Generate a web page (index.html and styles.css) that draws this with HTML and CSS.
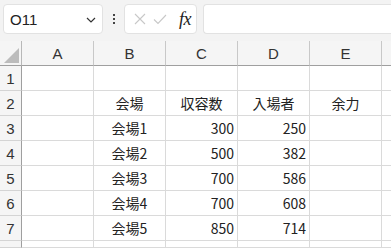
FILE: index.html
```html
<!DOCTYPE html>
<html lang="ja">
<head>
<meta charset="utf-8">
<link rel="stylesheet" href="styles.css">
</head>
<body>
<div class="bar">
  <div class="namebox">
    <span class="ref">O11</span>
    <svg class="chev" width="10" height="6" viewBox="0 0 10 6"><path d="M1 1 L5 5 L9 1" fill="none" stroke="#333" stroke-width="1.2"/></svg>
  </div>
  <div class="dots"><i></i><i></i><i></i></div>
  <div class="fbtns">
    <svg width="12" height="12" viewBox="0 0 12 12"><path d="M1 1 L11 11 M11 1 L1 11" stroke="#c8c8c8" stroke-width="1.1" fill="none"/></svg>
    <svg width="14" height="11" viewBox="0 0 14 11"><path d="M1 5.5 L5 9.5 L13 1" stroke="#c8c8c8" stroke-width="1.1" fill="none"/></svg>
    <span class="fx">fx</span>
  </div>
  <div class="finput"></div>
</div>
<div class="sheet">
  <div class="corner"><svg width="16" height="16" viewBox="0 0 16 16"><path d="M16 1 L16 16 L1 16 Z" fill="#bcbcbc"/></svg></div>
  <div class="ch">A</div><div class="ch">B</div><div class="ch">C</div><div class="ch">D</div><div class="ch">E</div><div class="ch last"></div>

  <div class="rh">1</div><div class="c"></div><div class="c"></div><div class="c"></div><div class="c"></div><div class="c"></div><div class="c last"></div>
  <div class="rh">2</div><div class="c"></div><div class="c ctr">会場</div><div class="c ctr">収容数</div><div class="c ctr">入場者</div><div class="c ctr">余力</div><div class="c last"></div>
  <div class="rh">3</div><div class="c"></div><div class="c ctr">会場1</div><div class="c num">300</div><div class="c num">250</div><div class="c"></div><div class="c last"></div>
  <div class="rh">4</div><div class="c"></div><div class="c ctr">会場2</div><div class="c num">500</div><div class="c num">382</div><div class="c"></div><div class="c last"></div>
  <div class="rh">5</div><div class="c"></div><div class="c ctr">会場3</div><div class="c num">700</div><div class="c num">586</div><div class="c"></div><div class="c last"></div>
  <div class="rh">6</div><div class="c"></div><div class="c ctr">会場4</div><div class="c num">700</div><div class="c num">608</div><div class="c"></div><div class="c last"></div>
  <div class="rh">7</div><div class="c"></div><div class="c ctr">会場5</div><div class="c num">850</div><div class="c num">714</div><div class="c"></div><div class="c last"></div>
  <div class="rh"></div><div class="c"></div><div class="c"></div><div class="c"></div><div class="c"></div><div class="c"></div><div class="c last"></div>
</div>
</body>
</html>
```
FILE: styles.css
```css
html, body { margin: 0; padding: 0; }
body {
  width: 391px; height: 248px; overflow: hidden;
  background: #fff;
  font-family: "Noto Sans CJK JP", "Noto Sans", sans-serif;
  color: #222;
}
.bar {
  height: 41px;
  background: #f3f3f3;
  display: flex;
  align-items: flex-start;
  padding: 4px 0 0 3px;
  box-sizing: border-box;
}
.namebox {
  width: 100px; height: 30px;
  box-sizing: border-box;
  background: #fff;
  border: 1px solid #e2e2e2;
  border-radius: 4px;
  display: flex; align-items: center; justify-content: space-between;
  padding: 0 6px 0 6px;
}
.ref { font-family: "Liberation Sans", "Noto Sans", sans-serif; font-size: 15px; color: #222; }
.chev { margin-top: 1px; }
.dots {
  width: 21px; height: 30px;
  display: flex; flex-direction: column; align-items: center; justify-content: center; gap: 2px;
}
.dots i { display: block; width: 2px; height: 2px; background: #444; }
.fbtns {
  width: 73px; height: 30px; box-sizing: border-box;
  background: #fff; border: 1px solid #e2e2e2; border-radius: 4px;
  display: flex; align-items: center; gap: 7px;
  padding-left: 9px;
}
.fx {
  font-family: "Liberation Serif", "DejaVu Serif", serif;
  font-style: italic; font-size: 18px; color: #222; margin-left: 5px;
  letter-spacing: -0.5px;
}
.finput {
  margin-left: 6px;
  flex: 1; height: 30px; box-sizing: border-box;
  background: #fff; border: 1px solid #e2e2e2; border-right: none;
  border-radius: 4px 0 0 4px;
}
.sheet {
  display: grid;
  grid-template-columns: 22px repeat(5, 72px) 9px;
  grid-template-rows: 25px repeat(7, 25px) 7px;
  overflow: hidden;
}
.corner {
  background: #f5f5f5;
  border-right: 1px solid #b8b8b8;
  border-bottom: 1px solid #9f9f9f;
  box-sizing: border-box;
  display: flex; align-items: flex-end; justify-content: flex-end;
  padding: 0 2px 2px 0;
}
.ch {
  background: #f5f5f5;
  border-right: 1px solid #c8c8c8;
  border-bottom: 1px solid #9f9f9f;
  box-sizing: border-box;
  display: flex; align-items: center; justify-content: center;
  font-family: "Liberation Sans", "Noto Sans", sans-serif;
  font-size: 15px; color: #333;
}
.rh {
  background: #f5f5f5;
  border-right: 1px solid #9f9f9f;
  border-bottom: 1px solid #d4d4d4;
  box-sizing: border-box;
  display: flex; align-items: center; justify-content: center;
  font-family: "Liberation Sans", "Noto Sans", sans-serif;
  font-size: 15px; color: #333;
}
.c {
  border-right: 1px solid #dadada;
  border-bottom: 1px solid #dadada;
  box-sizing: border-box;
  display: flex; align-items: center;
  font-size: 14px; color: #222;
  white-space: nowrap;
}
.last { border-right: none; }
.ctr { justify-content: center; }
.num { justify-content: flex-end; padding-right: 3px; }
```
